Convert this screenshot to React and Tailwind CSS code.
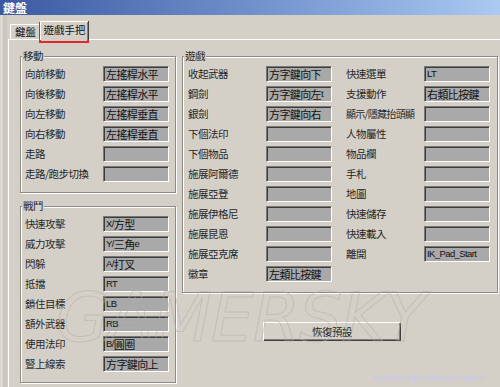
import React from "react";

const move = [
  ["向前移動", "左搖桿水平"],
  ["向後移動", "左搖桿水平"],
  ["向左移動", "左搖桿垂直"],
  ["向右移動", "左搖桿垂直"],
  ["走路", ""],
  ["走路/跑步切換", ""],
];

const fight = [
  ["快速攻擊", "X/方型"],
  ["威力攻擊", "Y/三角e"],
  ["閃躲", "A/打叉"],
  ["抵擋", "RT"],
  ["鎖住目標", "LB"],
  ["額外武器", "RB"],
  ["使用法印", "B/圓圈"],
  ["豎上線索", "方字鍵向上"],
];

const gameA = [
  ["收起武器", "方字鍵向下"],
  ["鋼劍", "方字鍵向左t"],
  ["銀劍", "方字鍵向右"],
  ["下個法印", ""],
  ["下個物品", ""],
  ["施展阿爾德", ""],
  ["施展亞登", ""],
  ["施展伊格尼", ""],
  ["施展昆恩", ""],
  ["施展亞克席", ""],
  ["徽章", "左類比按鍵"],
];

const gameB = [
  ["快速選單", "LT"],
  ["支援動作", "右類比按鍵"],
  ["顯示/隱藏抬頭顯", ""],
  ["人物屬性", ""],
  ["物品欄", ""],
  ["手札", ""],
  ["地圖", ""],
  ["快速儲存", ""],
  ["快速載入", ""],
  ["離開", "IK_Pad_Start"],
];

function Value({ text }) {
  const parts = text.split(/([A-Za-z_\/]+)/).filter((p) => p !== "");
  return (
    <>
      {parts.map((p, i) =>
        /^[A-Za-z_\/]+$/.test(p) ? (
          <span key={i} className="font-['Liberation_Sans',sans-serif] text-[9.5px]">
            {p}
          </span>
        ) : (
          <span key={i}>{p}</span>
        )
      )}
    </>
  );
}

function Row({ label, value }) {
  const tight = label.length > 7;
  return (
    <div className="flex h-[20px] items-center">
      <span
        className={
          tight
            ? "w-[78px] whitespace-nowrap text-[10px] leading-[14px] tracking-[-0.7px] text-[#262626]"
            : "w-[78px] whitespace-nowrap text-[10.5px] leading-[14px] tracking-[-0.5px] text-[#262626]"
        }
      >
        {label}
      </span>
      <div className="flex h-[16px] w-[66px] items-center overflow-hidden whitespace-nowrap border border-b-white border-l-[#777] border-r-white border-t-[#777] bg-[#a9a9a9] pl-[2px] text-[11px] leading-[14px] tracking-[-0.6px] text-[#111] shadow-[inset_1px_1px_0_#3c3c3c]">
        <Value text={value} />
      </div>
    </div>
  );
}

function Group({ title, className = "", children }) {
  return (
    <div
      className={
        "relative border border-[#8e8b84] pb-[8px] pt-[7px] shadow-[1px_1px_0_#ffffff,inset_1px_1px_0_#ffffff] " +
        className
      }
    >
      <span className="absolute left-[1px] top-[-8px] bg-[#d4d0c8] px-[1px] text-[10.5px] leading-[14px] tracking-[-0.5px] text-[#262626]">
        {title}
      </span>
      {children}
    </div>
  );
}

export default function App() {
  return (
    <div className="relative h-[387px] w-[500px] overflow-hidden bg-[#d4d0c8] font-['Noto_Sans_CJK_TC','Noto_Sans_CJK_SC',sans-serif]">
      {/* title bar */}
      <div className="flex h-[15px] items-center bg-gradient-to-r from-[#3b5aa2] via-[#7090cb] to-[#aacaf2] pl-[3px]">
        <span className="text-[12px] font-bold leading-[14px] text-white">鍵盤</span>
      </div>

      <div className="flex">
        {/* window left frame */}
        <div className="flex h-[372px] w-[8px] shrink-0">
          <div className="w-[3px] bg-[#dcd9d2]" />
          <div className="w-[4px] bg-[#cbc7bf]" />
          <div className="w-[1px] bg-[#d4d0c8]" />
        </div>

        <div className="flex-1">
          {/* tabs */}
          <div className="flex h-[24px] items-end">
            <div className="ml-[2px] flex h-[15px] w-[30px] items-center justify-center border-l border-t border-white shadow-[inset_-1px_0_0_#808080,1px_0_0_#404040] text-[10.5px] leading-[12px] text-[#111]">
              鍵盤
            </div>
            <div className="relative z-10 mb-[-1px] flex h-[19px] w-[48px] items-center justify-center border-l border-t border-white bg-[#d4d0c8] pb-[3px] text-[10.5px] leading-[12px] text-[#111] shadow-[inset_-1px_0_0_#808080,1px_0_0_#404040]">
              遊戲手把
            </div>
          </div>

          {/* panel */}
          <div className="h-[360px] w-[500px] border-l border-t border-white pl-[11px] pt-[16px]">
            <div className="flex items-start gap-[6px]">
              <div className="flex flex-col">
                <Group title="移動" className="pl-[4px] pr-[6px]">
                  {move.map(([l, v]) => (
                    <Row key={l} label={l} value={v} />
                  ))}
                </Group>
                <Group title="戰鬥" className="mt-[13px] pl-[4px] pr-[6px]">
                  {fight.map(([l, v]) => (
                    <Row key={l} label={l} value={v} />
                  ))}
                </Group>
              </div>

              <div className="flex flex-col">
                <Group title="遊戲" className="flex pl-[5px] pr-[7px]">
                  <div className="flex flex-col">
                    {gameA.map(([l, v]) => (
                      <Row key={l} label={l} value={v} />
                    ))}
                  </div>
                  <div className="ml-[14px] flex flex-col">
                    {gameB.map(([l, v]) => (
                      <Row key={l} label={l} value={v} />
                    ))}
                  </div>
                </Group>
                <button className="ml-[81px] mt-[29px] flex h-[18px] w-[137px] items-center justify-center border-l border-t border-white text-[10.5px] leading-[14px] tracking-[-0.5px] text-[#262626] shadow-[inset_-1px_-1px_0_#808080,1px_1px_0_#404040]">
                  恢復預設
                </button>
              </div>
            </div>
          </div>
        </div>
      </div>

      {/* red highlight around selected tab */}
      <div className="pointer-events-none absolute left-[39px] top-[22px] h-[21px] w-[50px] border-2 border-[#e0282c]" />

      {/* watermark */}
      <div className="pointer-events-none absolute left-[56px] top-[284px] whitespace-nowrap font-['DejaVu_Sans',sans-serif] text-[68px] italic leading-[68px] tracking-[-1px] text-transparent opacity-50 [-webkit-text-stroke:1px_#b3afa7]">
        GAMERSKY
      </div>
      <div className="pointer-events-none absolute left-[372px] top-[373px] whitespace-nowrap font-['Liberation_Sans',sans-serif] text-[8px] leading-[10px] text-[#c8c6f0]">
        http://shop.gamersky.com/game
      </div>
    </div>
  );
}
